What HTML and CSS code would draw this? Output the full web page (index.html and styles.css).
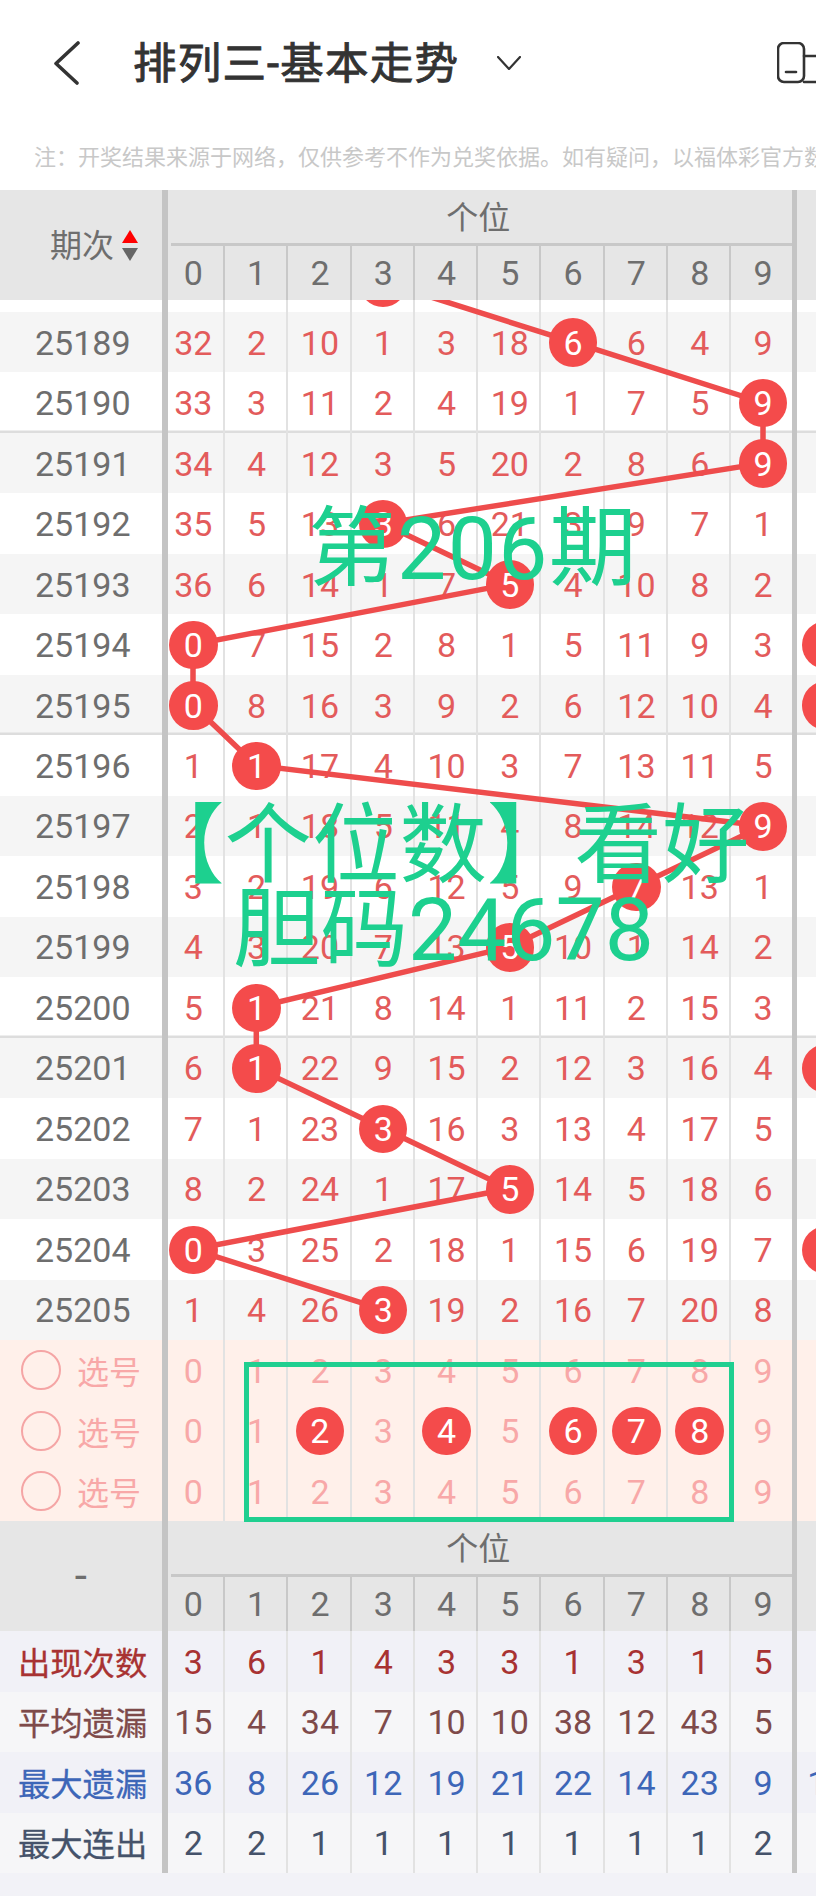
FILE: index.html
```html
<!DOCTYPE html>
<html lang="zh-CN">
<head>
    <meta charset="UTF-8">
    <meta name="viewport" content="width=device-width, initial-scale=1.0">
    <title>排列三-基本走势</title>
    <link rel="stylesheet" href="styles.css">
</head>
<body>
    <div class="topbar">
        <svg class="back" width="26" height="44" viewBox="0 0 26 44"><path d="M24 2 L2 22.5 L23 42"/></svg>
        <h1 class="title">排列三-基本走势</h1>
        <svg class="caret" width="24" height="14" viewBox="0 0 24 14"><path d="M1 1 L12 13 L23 1"/></svg>
        <svg class="device" width="39" height="42" viewBox="0 0 39 42">
            <rect x="1" y="1" width="26" height="39" rx="6"/>
            <path d="M9 30 H19"/>
            <path d="M27 14 H45 M27 40 H45"/>
        </svg>
    </div>
    <p class="note">注：开奖结果来源于网络，仅供参考不作为兑奖依据。如有疑问，以福体彩官方数据为准</p>

    <div class="trend">
        <div class="bar bar-left"></div>
        <div class="bar bar-right"></div>

        <div class="head">
            <div class="head-side">
                <span class="head-name">期次</span>
                <span class="sort"><i class="sort-up"></i><i class="sort-down"></i></span>
            </div>
            <div class="group">
                <div class="group-title">个位</div>
                <div class="digits">
                    <span>0</span><span>1</span><span>2</span><span>3</span><span>4</span><span>5</span><span>6</span><span>7</span><span>8</span><span>9</span>
                </div>
            </div>
        </div>

        <div class="history">
            <div class="row"><span class="period">25188</span><span class="cell"></span><span class="cell"></span><span class="cell"></span><span class="cell"><b class="ball">3</b></span><span class="cell"></span><span class="cell"></span><span class="cell"></span><span class="cell"></span><span class="cell"></span><span class="cell"></span></div>
            <div class="row"><span class="period">25189</span><span class="cell">32</span><span class="cell">2</span><span class="cell">10</span><span class="cell">1</span><span class="cell">3</span><span class="cell">18</span><span class="cell"><b class="ball">6</b></span><span class="cell">6</span><span class="cell">4</span><span class="cell">9</span></div>
            <div class="row line"><span class="period">25190</span><span class="cell">33</span><span class="cell">3</span><span class="cell">11</span><span class="cell">2</span><span class="cell">4</span><span class="cell">19</span><span class="cell">1</span><span class="cell">7</span><span class="cell">5</span><span class="cell"><b class="ball">9</b></span></div>
            <div class="row"><span class="period">25191</span><span class="cell">34</span><span class="cell">4</span><span class="cell">12</span><span class="cell">3</span><span class="cell">5</span><span class="cell">20</span><span class="cell">2</span><span class="cell">8</span><span class="cell">6</span><span class="cell"><b class="ball">9</b></span></div>
            <div class="row"><span class="period">25192</span><span class="cell">35</span><span class="cell">5</span><span class="cell">13</span><span class="cell"><b class="ball">3</b></span><span class="cell">6</span><span class="cell">21</span><span class="cell">3</span><span class="cell">9</span><span class="cell">7</span><span class="cell">1</span></div>
            <div class="row"><span class="period">25193</span><span class="cell">36</span><span class="cell">6</span><span class="cell">14</span><span class="cell">1</span><span class="cell">7</span><span class="cell"><b class="ball">5</b></span><span class="cell">4</span><span class="cell">10</span><span class="cell">8</span><span class="cell">2</span></div>
            <div class="row"><span class="period">25194</span><span class="cell"><b class="ball">0</b></span><span class="cell">7</span><span class="cell">15</span><span class="cell">2</span><span class="cell">8</span><span class="cell">1</span><span class="cell">5</span><span class="cell">11</span><span class="cell">9</span><span class="cell">3</span><span class="cell"><b class="ball">0</b></span></div>
            <div class="row line"><span class="period">25195</span><span class="cell"><b class="ball">0</b></span><span class="cell">8</span><span class="cell">16</span><span class="cell">3</span><span class="cell">9</span><span class="cell">2</span><span class="cell">6</span><span class="cell">12</span><span class="cell">10</span><span class="cell">4</span><span class="cell"><b class="ball">0</b></span></div>
            <div class="row"><span class="period">25196</span><span class="cell">1</span><span class="cell"><b class="ball">1</b></span><span class="cell">17</span><span class="cell">4</span><span class="cell">10</span><span class="cell">3</span><span class="cell">7</span><span class="cell">13</span><span class="cell">11</span><span class="cell">5</span></div>
            <div class="row"><span class="period">25197</span><span class="cell">2</span><span class="cell">1</span><span class="cell">18</span><span class="cell">5</span><span class="cell">11</span><span class="cell">4</span><span class="cell">8</span><span class="cell">14</span><span class="cell">12</span><span class="cell"><b class="ball">9</b></span></div>
            <div class="row"><span class="period">25198</span><span class="cell">3</span><span class="cell">2</span><span class="cell">19</span><span class="cell">6</span><span class="cell">12</span><span class="cell">5</span><span class="cell">9</span><span class="cell"><b class="ball">7</b></span><span class="cell">13</span><span class="cell">1</span></div>
            <div class="row"><span class="period">25199</span><span class="cell">4</span><span class="cell">3</span><span class="cell">20</span><span class="cell">7</span><span class="cell">13</span><span class="cell"><b class="ball">5</b></span><span class="cell">10</span><span class="cell">1</span><span class="cell">14</span><span class="cell">2</span></div>
            <div class="row line"><span class="period">25200</span><span class="cell">5</span><span class="cell"><b class="ball">1</b></span><span class="cell">21</span><span class="cell">8</span><span class="cell">14</span><span class="cell">1</span><span class="cell">11</span><span class="cell">2</span><span class="cell">15</span><span class="cell">3</span></div>
            <div class="row"><span class="period">25201</span><span class="cell">6</span><span class="cell"><b class="ball">1</b></span><span class="cell">22</span><span class="cell">9</span><span class="cell">15</span><span class="cell">2</span><span class="cell">12</span><span class="cell">3</span><span class="cell">16</span><span class="cell">4</span><span class="cell"><b class="ball">0</b></span></div>
            <div class="row"><span class="period">25202</span><span class="cell">7</span><span class="cell">1</span><span class="cell">23</span><span class="cell"><b class="ball">3</b></span><span class="cell">16</span><span class="cell">3</span><span class="cell">13</span><span class="cell">4</span><span class="cell">17</span><span class="cell">5</span></div>
            <div class="row"><span class="period">25203</span><span class="cell">8</span><span class="cell">2</span><span class="cell">24</span><span class="cell">1</span><span class="cell">17</span><span class="cell"><b class="ball">5</b></span><span class="cell">14</span><span class="cell">5</span><span class="cell">18</span><span class="cell">6</span></div>
            <div class="row"><span class="period">25204</span><span class="cell"><b class="ball">0</b></span><span class="cell">3</span><span class="cell">25</span><span class="cell">2</span><span class="cell">18</span><span class="cell">1</span><span class="cell">15</span><span class="cell">6</span><span class="cell">19</span><span class="cell">7</span><span class="cell"><b class="ball">0</b></span></div>
            <div class="row"><span class="period">25205</span><span class="cell">1</span><span class="cell">4</span><span class="cell">26</span><span class="cell"><b class="ball">3</b></span><span class="cell">19</span><span class="cell">2</span><span class="cell">16</span><span class="cell">7</span><span class="cell">20</span><span class="cell">8</span></div>

            <!-- viewBox is in page coordinates, so the points read off the screenshot directly -->
            <svg class="lines" width="816" height="1040" viewBox="0 300 816 1040">
                <polyline points="383,281.8 573,342.2 763,402.7 763,463.2 383,523.6 509.5,584.1 193,644.6 193,705 256.3,765.5 763,826 636,886.5 509.5,946.9 256.3,1007.4 256.3,1067.9 383,1128.3 509.5,1188.8 193,1249.3 383,1309.7"/>
            </svg>
        </div>

        <div class="picks">
            <div class="row pick"><span class="pick-side"><i class="radio"></i>选号</span><span class="cell">0</span><span class="cell">1</span><span class="cell">2</span><span class="cell">3</span><span class="cell">4</span><span class="cell">5</span><span class="cell">6</span><span class="cell">7</span><span class="cell">8</span><span class="cell">9</span></div>
            <div class="row pick"><span class="pick-side"><i class="radio"></i>选号</span><span class="cell">0</span><span class="cell">1</span><span class="cell"><b class="ball">2</b></span><span class="cell">3</span><span class="cell"><b class="ball">4</b></span><span class="cell">5</span><span class="cell"><b class="ball">6</b></span><span class="cell"><b class="ball">7</b></span><span class="cell"><b class="ball">8</b></span><span class="cell">9</span></div>
            <div class="row pick"><span class="pick-side"><i class="radio"></i>选号</span><span class="cell">0</span><span class="cell">1</span><span class="cell">2</span><span class="cell">3</span><span class="cell">4</span><span class="cell">5</span><span class="cell">6</span><span class="cell">7</span><span class="cell">8</span><span class="cell">9</span></div>
            <div class="pick-box"></div>
        </div>

        <div class="head">
            <div class="head-side head-dash">-</div>
            <div class="group">
                <div class="group-title">个位</div>
                <div class="digits">
                    <span>0</span><span>1</span><span>2</span><span>3</span><span>4</span><span>5</span><span>6</span><span>7</span><span>8</span><span>9</span>
                </div>
            </div>
        </div>

        <div class="row stat stat-count"><span class="stat-name">出现次数</span><span class="cell">3</span><span class="cell">6</span><span class="cell">1</span><span class="cell">4</span><span class="cell">3</span><span class="cell">3</span><span class="cell">1</span><span class="cell">3</span><span class="cell">1</span><span class="cell">5</span></div>
        <div class="row stat stat-avg"><span class="stat-name">平均遗漏</span><span class="cell">15</span><span class="cell">4</span><span class="cell">34</span><span class="cell">7</span><span class="cell">10</span><span class="cell">10</span><span class="cell">38</span><span class="cell">12</span><span class="cell">43</span><span class="cell">5</span></div>
        <div class="row stat stat-max"><span class="stat-name">最大遗漏</span><span class="cell">36</span><span class="cell">8</span><span class="cell">26</span><span class="cell">12</span><span class="cell">19</span><span class="cell">21</span><span class="cell">22</span><span class="cell">14</span><span class="cell">23</span><span class="cell">9</span><span class="cell">12</span></div>
        <div class="row stat stat-run"><span class="stat-name">最大连出</span><span class="cell">2</span><span class="cell">2</span><span class="cell">1</span><span class="cell">1</span><span class="cell">1</span><span class="cell">1</span><span class="cell">1</span><span class="cell">1</span><span class="cell">1</span><span class="cell">2</span></div>

        <div class="callout callout-issue">第206期</div>
        <div class="callout callout-pos">【个位数】看好</div>
        <div class="callout callout-nums">胆码24678</div>
    </div>
</body>
</html>
```

FILE: styles.css
```css
* {
    box-sizing: border-box;
}

html,
body {
    margin: 0;
    overflow: hidden;
}

body {
    width: 816px;
    height: 1896px;
    background-color: #f2f2f7;
    font-family: Roboto, "Noto Sans CJK SC", sans-serif;
    font-size: 34px;
    color: #6e6e6e;
}

.topbar {
    display: flex;
    align-items: center;
    height: 126px;
    padding-left: 54px;
    background-color: #fff;
}

.back path,
.caret path,
.device rect,
.device path {
    fill: none;
    stroke: #333;
    stroke-linecap: round;
    stroke-linejoin: round;
}

.back path {
    stroke-width: 3.6;
}

.caret path {
    stroke-width: 2.2;
}

.device rect,
.device path {
    stroke-width: 2.6;
}

.title {
    margin: 0 0 5px 53px;
    font-size: 43.5px;
    font-weight: 400;
    -webkit-text-stroke: 0.9px #333;
    letter-spacing: 1.2px;
    color: #333;
    white-space: nowrap;
}

.caret {
    margin-left: 38px;
}

.device {
    margin-left: auto;
}

.note {
    margin: 0;
    height: 64px;
    padding-left: 34px;
    background-color: #fff;
    font-size: 22px;
    line-height: 64px;
    color: #c8c8c8;
    white-space: nowrap;
    overflow: hidden;
}

.trend {
    position: relative;
    overflow: hidden;
}

.bar {
    position: absolute;
    top: 0;
    bottom: 0;
    width: 5.4px;
    background-color: #c4c4c4;
    z-index: 1;
}

.bar-left {
    left: 162.3px;
}

.bar-right {
    left: 791.7px;
}

/* table heads */
.head {
    display: grid;
    grid-template-columns: 161.7px 633px;
    height: 110px;
    background-color: #e6e6e6;
}

.head-side {
    display: flex;
    align-items: center;
    gap: 8px;
    padding-left: 50px;
    font-size: 32px;
}

.head-name {
    margin-bottom: 4px;
}

.head-dash {
    padding: 0;
    justify-content: center;
    font-size: 44px;
}

.sort {
    display: flex;
    flex-direction: column;
    gap: 5px;
}

.sort i {
    display: block;
    width: 0;
    height: 0;
    border-left: 8px solid transparent;
    border-right: 8px solid transparent;
}

.sort-up {
    border-bottom: 13px solid #f00;
}

.sort-down {
    border-top: 13px solid #666;
}

.group-title {
    height: 55.5px;
    margin: 0 3px 0 9px;
    padding-right: 6px;
    border-bottom: 3px solid #c8c8c8;
    font-size: 32px;
    line-height: 57px;
    text-align: center;
}

.digits {
    display: grid;
    grid-template-columns: repeat(10, 63.3px);
    height: 54.5px;
}

.digits span {
    display: flex;
    align-items: center;
    justify-content: center;
    box-shadow: inset -2px 0 #c8c8c8;
}

/* rows */
.row {
    display: grid;
    grid-template-columns: 161.7px repeat(11, 63.3px);
    height: 60.47px;
    background-color: #fff;
}

.history .row:nth-child(even) {
    background-color: #f5f5f5;
}

.history {
    position: relative;
    overflow: hidden;
}

.history .row:first-child {
    margin-top: -48.47px;
}

.history .row > span,
.pick > .cell {
    padding-top: 1px;
}

.row.line {
    box-shadow: inset 0 -2.5px #ddd;
}

.period {
    display: flex;
    align-items: center;
    padding-left: 35px;
}

.cell {
    display: flex;
    align-items: center;
    justify-content: center;
    box-shadow: inset -2px 0 #e2e2e2;
    color: #e35b5b;
}

.row .cell:nth-child(12) {
    box-shadow: none;
}

.ball {
    position: relative;
    z-index: 2;
    display: flex;
    flex: none;
    align-items: center;
    justify-content: center;
    width: 48.5px;
    height: 48.5px;
    border-radius: 50%;
    background-color: #f44b4b;
    font-weight: 400;
    color: #fff;
}

.lines {
    position: absolute;
    top: 0;
    left: 0;
    z-index: 1;
}

.lines polyline {
    fill: none;
    stroke: #ee4c4c;
    stroke-width: 5.5;
}

/* pick rows */
.picks {
    position: relative;
}

.row.pick {
    background-color: #fff0ea;
}

.pick .cell {
    color: #f8a8a8;
}

.pick .ball {
    color: #fff;
}

.pick-side {
    display: flex;
    align-items: center;
    gap: 16px;
    padding-left: 21px;
    font-size: 32px;
    color: #f8a8a8;
}

.radio {
    display: block;
    width: 40px;
    height: 40px;
    border: 2px solid #f5a5a5;
    border-radius: 50%;
}

.pick-box {
    position: absolute;
    top: 22.3px;
    left: 244px;
    width: 490.3px;
    height: 159.7px;
    border: 5px solid #20cf90;
    z-index: 3;
}

/* stat rows */
.stat-name {
    display: flex;
    align-items: center;
    padding: 0 0 2px 18px;
    font-size: 32.3px;
    -webkit-text-stroke: 0.3px currentColor;
    white-space: nowrap;
}

.row.stat-count,
.row.stat-max {
    background-color: #f1f1f7;
}

.row.stat-avg,
.row.stat-run {
    background-color: #f6f6f8;
}

.stat-count .cell,
.stat-count .stat-name {
    color: #a83232;
}

.stat-avg .cell,
.stat-avg .stat-name {
    color: #7e4a4a;
}

.stat-max .cell,
.stat-max .stat-name {
    color: #3d66b8;
}

.stat-run .cell,
.stat-run .stat-name {
    color: #45526a;
}

/* big green notes laid over the chart */
.callout {
    position: absolute;
    z-index: 3;
    font-size: 87.5px;
    font-weight: 400;
    line-height: 1;
    color: #1dd08f;
    white-space: nowrap;
}

.callout-issue {
    top: 316px;
    left: 308px;
    letter-spacing: 1.5px;
}

.callout-pos {
    top: 613px;
    left: 137px;
}

.callout-nums {
    top: 697px;
    left: 233px;
}
```
